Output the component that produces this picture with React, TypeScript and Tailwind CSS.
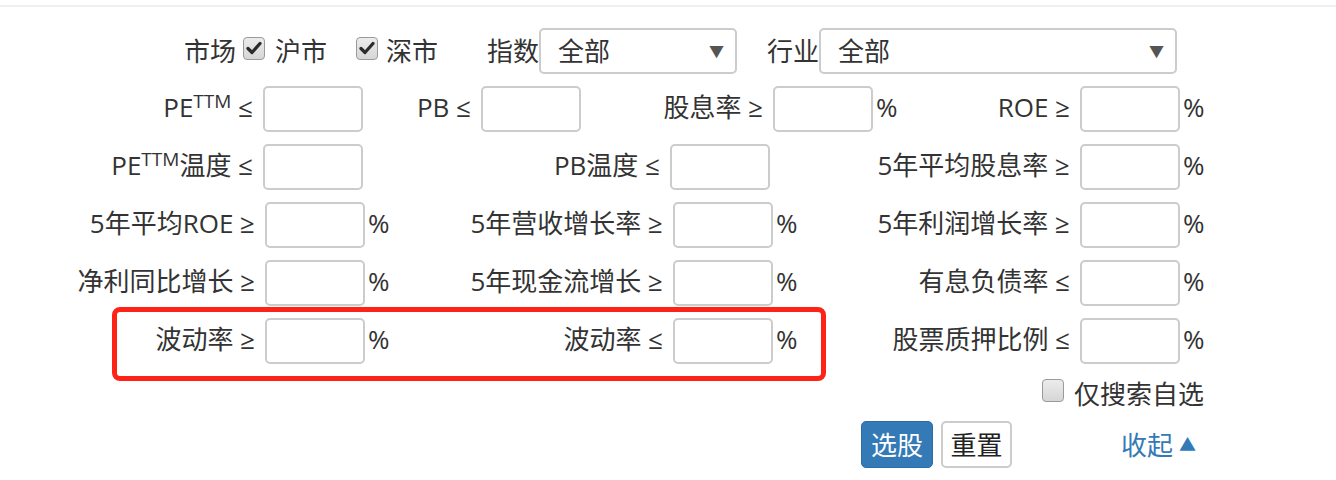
import React from "react";

const Box = () => (
  <div className="w-[100px] h-[46px] shrink-0 border-2 border-[#ccc] rounded-[5px] bg-white" />
);

const Check = ({ checked }: { checked?: boolean }) => (
  <span className="w-[22px] h-[23px] shrink-0 rounded-[4px] border border-[#9a9a9a] bg-gradient-to-b from-[#ececec] to-[#d6d6d6] flex items-center justify-center">
    {checked && (
      <svg width="16" height="14" viewBox="0 0 16 14">
        <path d="M2 7.5 L6 11.5 L14 2.5" fill="none" stroke="#2b2b2b" strokeWidth="3.2" strokeLinecap="round" strokeLinejoin="round" />
      </svg>
    )}
  </span>
);

const Cell = ({ label, lw, pct }: { label: React.ReactNode; lw: string; pct?: boolean }) => (
  <div className="flex items-center">
    <span className={`${lw} shrink-0 text-right whitespace-nowrap pb-[4px]`}>{label}</span>
    <span className="ml-[10px]">
      <Box />
    </span>
    {pct && <span className="w-[24px] pl-[3px] pb-[4px]">%</span>}
  </div>
);

const PE = () => (
  <>
    PE<sup className="text-[19px]">TTM</sup>
  </>
);

const Select = ({ w }: { w: string }) => (
  <div className={`${w} h-[46px] border-2 border-[#ccc] rounded-[5px] bg-white flex items-center justify-between pl-[17px] pr-[11px]`}>
    <span>全部</span>
    <span className="text-[15px] text-[#555]">▼</span>
  </div>
);

const App = () => {
  return (
    <div className="relative w-[1336px] h-[480px] bg-white overflow-hidden text-[26px] leading-none text-[#333] font-['Open_Sans','Noto_Sans_CJK_SC',sans-serif]">
      <div className="mt-[5px] h-[2px] bg-[#efefef]" />

      <div className="pt-[21px] w-[1204px] flex flex-col gap-[12px]">
        {/* 市场 / 指数 / 行业 */}
        <div className="flex items-center h-[46px] pl-[184px]">
          <span>市场</span>
          <span className="ml-[7px] -mt-[6px]">
            <Check checked />
          </span>
          <span className="ml-[10px]">沪市</span>
          <span className="ml-[29px] -mt-[6px]">
            <Check checked />
          </span>
          <span className="ml-[8px]">深市</span>
          <span className="ml-[49px]">指数</span>
          <Select w="w-[198px]" />
          <span className="ml-[30px]">行业</span>
          <Select w="w-[358px]" />
        </div>

        <div className="flex items-center">
          <Cell lw="w-[253px]" label={<><PE /> ≤</>} />
          <Cell lw="w-[108px]" label="PB ≤" />
          <Cell lw="w-[182px]" label="股息率 ≥" pct />
          <Cell lw="w-[173px]" label="ROE ≥" pct />
        </div>

        <div className="flex items-center">
          <Cell lw="w-[253px]" label={<><PE />温度 ≤</>} />
          <Cell lw="w-[297px]" label="PB温度 ≤" />
          <Cell lw="w-[300px]" label="5年平均股息率 ≥" pct />
        </div>

        <div className="flex items-center">
          <Cell lw="w-[255px]" label="5年平均ROE ≥" pct />
          <Cell lw="w-[274px]" label="5年营收增长率 ≥" pct />
          <Cell lw="w-[273px]" label="5年利润增长率 ≥" pct />
        </div>

        <div className="flex items-center">
          <Cell lw="w-[255px]" label="净利同比增长 ≥" pct />
          <Cell lw="w-[274px]" label="5年现金流增长 ≥" pct />
          <Cell lw="w-[273px]" label="有息负债率 ≤" pct />
        </div>

        <div className="flex items-center">
          <Cell lw="w-[255px]" label="波动率 ≥" pct />
          <Cell lw="w-[274px]" label="波动率 ≤" pct />
          <Cell lw="w-[273px]" label="股票质押比例 ≤" pct />
        </div>

        {/* 仅搜索自选 */}
        <div className="flex justify-end items-center h-[34px] mt-[1px]">
          <span className="-mt-[8px]">
            <Check />
          </span>
          <span className="ml-[10px]">仅搜索自选</span>
        </div>

        {/* buttons */}
        <div className="flex items-center -mt-[2px] pl-[861px]">
          <button className="w-[72px] h-[47px] rounded-[5px] bg-[#337ab7] border border-[#2e6da4] text-white">选股</button>
          <button className="ml-[8px] w-[71px] h-[47px] rounded-[5px] bg-white border-2 border-[#ccc] text-[#222]">重置</button>
          <span className="ml-[109px] text-[#337ab7] flex items-center">
            收起<span className="ml-[6px] text-[17px]">▲</span>
          </span>
        </div>
      </div>

      {/* annotation */}
      <div className="absolute left-[112px] top-[307px] w-[714px] h-[74px] border-[5px] border-[#fd2417] rounded-[8px] pointer-events-none" />
    </div>
  );
};

export default App;
